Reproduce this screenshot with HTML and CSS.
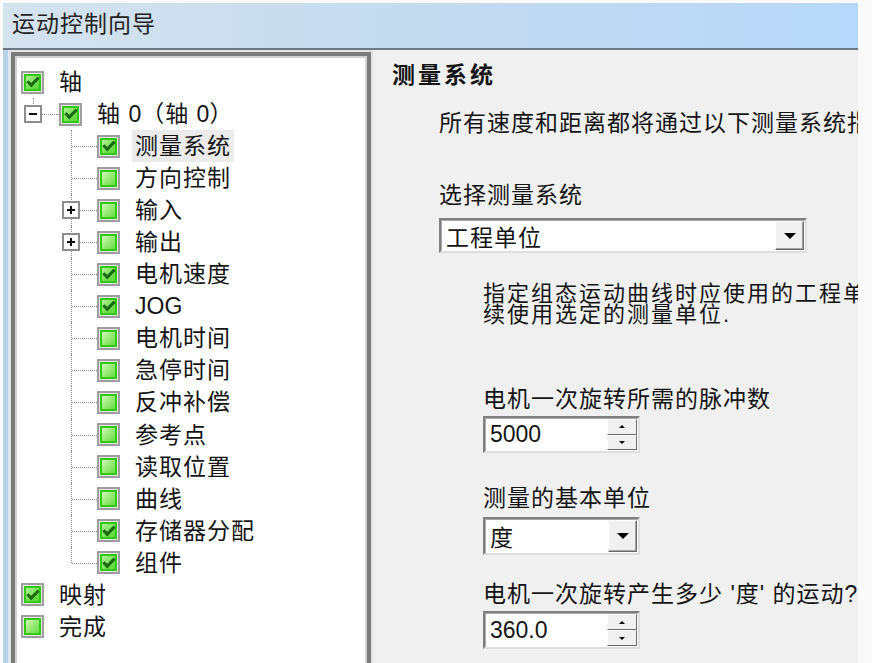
FILE: index.html
```html
<!DOCTYPE html>
<html lang="zh-CN">
<head>
    <meta charset="UTF-8">
    <title>运动控制向导</title>
    <link rel="stylesheet" href="styles.css">
</head>
<body>
    <div class="window">
        <div class="titlebar">运动控制向导</div>
        <div class="main">
            <!-- wizard steps -->
            <div class="tree">
                <div class="row"><span class="cb on"></span><span class="label">轴</span></div>
                <div class="row"><span class="ind ell"><span class="exp minus"></span></span><span class="cb on"></span><span class="label">轴 <span class="num">0</span>（轴 <span class="num">0</span>）</span></div>
                <div class="row"><span class="ind"></span><span class="ind tee"></span><span class="cb on"></span><span class="label selected">测量系统</span></div>
                <div class="row"><span class="ind"></span><span class="ind tee"></span><span class="cb"></span><span class="label">方向控制</span></div>
                <div class="row"><span class="ind"></span><span class="ind tee"><span class="exp plus"></span></span><span class="cb"></span><span class="label">输入</span></div>
                <div class="row"><span class="ind"></span><span class="ind tee"><span class="exp plus"></span></span><span class="cb"></span><span class="label">输出</span></div>
                <div class="row"><span class="ind"></span><span class="ind tee"></span><span class="cb on"></span><span class="label">电机速度</span></div>
                <div class="row"><span class="ind"></span><span class="ind tee"></span><span class="cb on"></span><span class="label num">JOG</span></div>
                <div class="row"><span class="ind"></span><span class="ind tee"></span><span class="cb"></span><span class="label">电机时间</span></div>
                <div class="row"><span class="ind"></span><span class="ind tee"></span><span class="cb"></span><span class="label">急停时间</span></div>
                <div class="row"><span class="ind"></span><span class="ind tee"></span><span class="cb"></span><span class="label">反冲补偿</span></div>
                <div class="row"><span class="ind"></span><span class="ind tee"></span><span class="cb"></span><span class="label">参考点</span></div>
                <div class="row"><span class="ind"></span><span class="ind tee"></span><span class="cb"></span><span class="label">读取位置</span></div>
                <div class="row"><span class="ind"></span><span class="ind tee"></span><span class="cb"></span><span class="label">曲线</span></div>
                <div class="row"><span class="ind"></span><span class="ind tee"></span><span class="cb on"></span><span class="label">存储器分配</span></div>
                <div class="row"><span class="ind"></span><span class="ind ell"></span><span class="cb on"></span><span class="label">组件</span></div>
                <div class="row"><span class="cb on"></span><span class="label">映射</span></div>
                <div class="row"><span class="cb"></span><span class="label">完成</span></div>
            </div>

            <!-- current page -->
            <div class="content">
                <div class="heading">测量系统</div>
                <div class="intro">所有速度和距离都将通过以下测量系统指定。</div>

                <div class="field-label first">选择测量系统</div>
                <div class="box combo wide">
                    <span class="value">工程单位</span>
                    <span class="drop"></span>
                </div>

                <div class="note">指定组态运动曲线时应使用的工程单<br>续使用选定的测量单位.</div>

                <div class="field-label pulses">电机一次旋转所需的脉冲数</div>
                <div class="box spin">
                    <span class="value num">5000</span>
                    <span class="arrows"><span class="up"></span><span class="down"></span></span>
                </div>

                <div class="field-label unit">测量的基本单位</div>
                <div class="box combo narrow">
                    <span class="value">度</span>
                    <span class="drop"></span>
                </div>

                <div class="field-label travel">电机一次旋转产生多少 '度' 的运动?</div>
                <div class="box spin last">
                    <span class="value num">360.0</span>
                    <span class="arrows"><span class="up"></span><span class="down"></span></span>
                </div>
            </div>
        </div>
    </div>
</body>
</html>
```

FILE: styles.css
```css
/* Page */
body {
    margin: 0;
    background-color: #fafafa;
    font-family: 'Liberation Sans', 'Noto Sans CJK SC', sans-serif;
    font-size: 23px;
    letter-spacing: 1px;
    color: #141414;
    overflow: hidden;
}

.window {
    margin: 3px 0 0 3px;
    width: 855px;
    height: 660px;
    display: flex;
    flex-direction: column;
    background-color: #f0f0f0;
    overflow: hidden;
}

.titlebar {
    flex: none;
    height: 47px;
    box-sizing: border-box;
    padding: 6px 0 0 9px;
    line-height: 30px;
    color: #222;
    background: linear-gradient(90deg, #d5e3ef 0%, #c5dbef 45%, #b7d8fa 100%);
    border-bottom: 2px solid #6b7886;
    box-shadow: 0 1px 0 #f6f8fa;
}

.main {
    flex: 1;
    display: flex;
    min-height: 0;
    padding-left: 8px;
    background: linear-gradient(90deg, #b9d1ea 0 5px, #e3e8ee 5px 8px, #f0f0f0 8px);
}

/* Step tree */
.tree {
    flex: none;
    width: 360px;
    height: 640px;
    margin-top: 2px;
    box-sizing: border-box;
    padding: 10px 0 0 6px;
    background-color: #fff;
    border: 4px solid #7b7b7b;
    box-shadow: 0 0 0 2px #e2e2e2, inset 0 0 0 2px #d2d2d2;
}

.row {
    display: flex;
    align-items: center;
    height: 32.06px;
}

.ind {
    flex: none;
    width: 38px;
    align-self: stretch;
    position: relative;
    display: flex;
    align-items: center;
}

.ind.tee::before,
.ind.ell::before {
    content: '';
    position: absolute;
    left: 12px;
    top: 0;
    bottom: 0;
    border-left: 1px dotted #8c8c8c;
}

.ind.ell::before {
    bottom: 50%;
}

.ind.tee::after,
.ind.ell::after {
    content: '';
    position: absolute;
    left: 13px;
    right: 0;
    top: 50%;
    border-top: 1px dotted #8c8c8c;
}

.exp {
    position: relative;
    z-index: 1;
    width: 18px;
    height: 18px;
    margin-left: 3px;
    box-sizing: border-box;
    border: 2px solid #8d8d8d;
    background-color: #fff;
    display: flex;
    align-items: center;
    justify-content: center;
}

.exp::before {
    content: '';
    width: 8px;
    height: 2px;
    background-color: #111;
}

.exp.plus::after {
    content: '';
    position: absolute;
    width: 2px;
    height: 8px;
    background-color: #111;
}

.cb {
    flex: none;
    width: 23px;
    height: 23px;
    box-sizing: border-box;
    border: 2px solid #9e9e9e;
    box-shadow: inset 0 0 0 1px #e6e6e6, inset 0 0 0 3px #31c914;
    background: linear-gradient(135deg, #dafcc6 10%, #8fe96c 55%, #5ad935 100%);
    display: flex;
    align-items: center;
    justify-content: center;
}

.cb.on {
    background: linear-gradient(135deg, #b9f39d 10%, #6fdf4b 60%, #4fd22c 100%);
}

.cb.on::after {
    content: '';
    width: 9px;
    height: 4px;
    margin-top: -3px;
    border-left: 3px solid #1b6a10;
    border-bottom: 3px solid #1b6a10;
    transform: rotate(-45deg);
}

.label {
    margin-left: 12px;
    padding: 0 3px;
    line-height: 32px;
    white-space: nowrap;
}

.label.selected {
    background-color: #ebebeb;
}

.num {
    letter-spacing: 0;
}

/* Page content */
.content {
    flex: 1;
    min-width: 0;
    margin-left: 2px;
    display: flex;
    flex-direction: column;
    align-items: flex-start;
    white-space: nowrap;
    overflow: hidden;
}

.heading {
    margin: 11px 0 0 19px;
    font-size: 23px;
    font-weight: bold;
    letter-spacing: 3px;
    line-height: 28px;
}

.intro {
    margin: 20px 0 0 66px;
    line-height: 28px;
}

.field-label {
    margin-left: 110px;
    line-height: 28px;
}

.field-label.first {
    margin: 44px 0 0 66px;
}

.field-label.pulses { margin-top: 60px; }
.field-label.unit { margin-top: 31px; }
.field-label.travel { margin-top: 25px; }

.note {
    margin: 30px 0 0 110px;
    font-size: 22px;
    letter-spacing: 2px;
    line-height: 21px;
}

/* Sunken input boxes */
.box {
    display: flex;
    box-sizing: border-box;
    margin-left: 110px;
    width: 157px;
    height: 38px;
    background-color: #fff;
    border: 2px solid;
    border-color: #7f7f7f #dedede #dedede #7f7f7f;
    box-shadow: inset 1px 1px 0 #a9a9a9;
}

.box .value {
    flex: 1;
    padding-left: 5px;
    display: flex;
    align-items: center;
}

.combo.wide {
    margin: 9px 0 0 66px;
    width: 368px;
    height: 35px;
}

.combo.narrow { margin-top: 5px; }
.spin { margin-top: 3px; height: 37px; }
.spin.last { margin-top: 3px; height: 38px; }

.drop {
    flex: none;
    width: 29px;
    margin: 1px;
    box-sizing: border-box;
    background-color: #f0f0f0;
    border: 1px solid;
    border-color: #fff #6a6a6a #6a6a6a #fff;
    box-shadow: inset -1px -1px 0 #a3a3a3;
    display: flex;
    align-items: center;
    justify-content: center;
}

.drop::before {
    content: '';
    border-left: 6px solid transparent;
    border-right: 6px solid transparent;
    border-top: 6px solid #000;
}

.arrows {
    flex: none;
    width: 30px;
    margin: 1px;
    display: flex;
    flex-direction: column;
}

.arrows .up,
.arrows .down {
    flex: 1;
    box-sizing: border-box;
    background-color: #f0f0f0;
    border: 1px solid;
    border-color: #fff #6a6a6a #6a6a6a #fff;
    display: flex;
    align-items: center;
    justify-content: center;
}

.arrows .up::before {
    content: '';
    border-left: 3px solid transparent;
    border-right: 3px solid transparent;
    border-bottom: 3px solid #000;
}

.arrows .down::before {
    content: '';
    border-left: 3px solid transparent;
    border-right: 3px solid transparent;
    border-top: 3px solid #000;
}
```
